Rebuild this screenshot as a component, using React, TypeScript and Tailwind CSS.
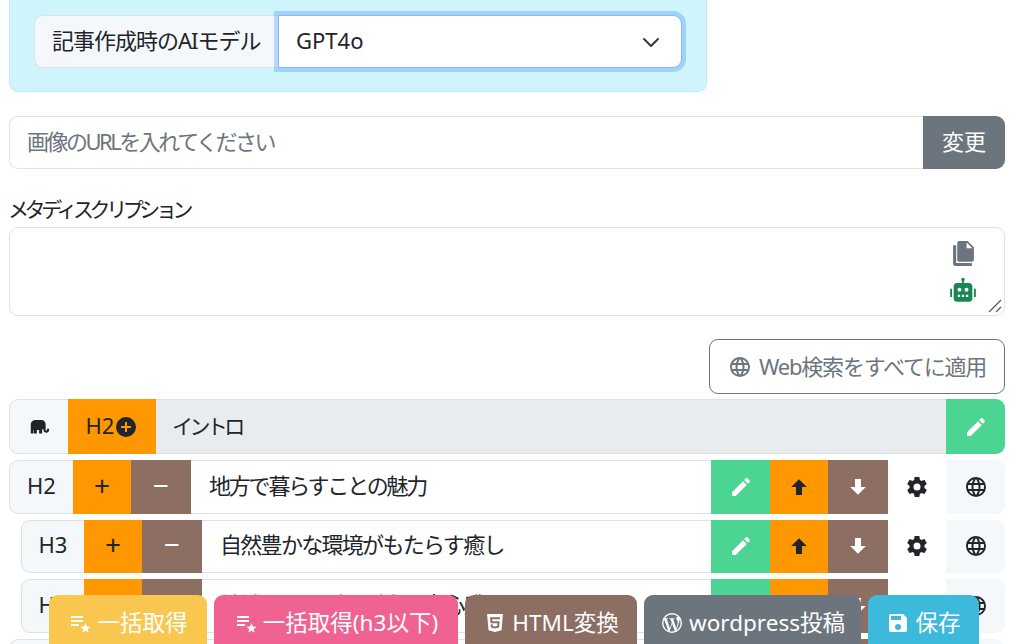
const P = {
  pencil: "M20.71,7.04C21.1,6.65 21.1,6 20.71,5.63L18.37,3.29C18,2.9 17.35,2.9 16.96,3.29L15.12,5.12L18.87,8.87M3,17.25V21H6.75L17.81,9.93L14.06,6.18L3,17.25Z",
  up: "M15,20H9V12H4.16L12,4.16L19.84,12H15V20Z",
  down: "M9,4H15V12H19.84L12,19.84L4.16,12H9V4Z",
  cog: "M12,15.5A3.5,3.5 0 0,1 8.5,12A3.5,3.5 0 0,1 12,8.5A3.5,3.5 0 0,1 15.5,12A3.5,3.5 0 0,1 12,15.5M19.43,12.97C19.47,12.65 19.5,12.33 19.5,12C19.5,11.67 19.47,11.34 19.43,11L21.54,9.37C21.73,9.22 21.78,8.95 21.66,8.73L19.66,5.27C19.54,5.05 19.27,4.96 19.05,5.05L16.56,6.05C16.04,5.66 15.5,5.32 14.87,5.07L14.5,2.42C14.46,2.18 14.25,2 14,2H10C9.75,2 9.54,2.18 9.5,2.42L9.13,5.07C8.5,5.32 7.96,5.66 7.44,6.05L4.95,5.05C4.73,4.96 4.46,5.05 4.34,5.27L2.34,8.73C2.21,8.95 2.27,9.22 2.46,9.37L4.57,11C4.53,11.34 4.5,11.67 4.5,12C4.5,12.33 4.53,12.65 4.57,12.97L2.46,14.63C2.27,14.78 2.21,15.05 2.34,15.27L4.34,18.73C4.46,18.95 4.73,19.03 4.95,18.95L7.44,17.94C7.96,18.34 8.5,18.68 9.13,18.93L9.5,21.58C9.54,21.82 9.75,22 10,22H14C14.25,22 14.46,21.82 14.5,21.58L14.87,18.93C15.5,18.67 16.04,18.34 16.56,17.94L19.05,18.95C19.27,19.03 19.54,18.95 19.66,18.73L21.66,15.27C21.78,15.05 21.73,14.78 21.54,14.63L19.43,12.97Z",
  web: "M16.36,14C16.44,13.34 16.5,12.68 16.5,12C16.5,11.32 16.44,10.66 16.36,10H19.74C19.9,10.64 20,11.31 20,12C20,12.69 19.9,13.36 19.74,14M14.59,19.56C15.19,18.45 15.65,17.25 15.97,16H18.92C17.96,17.65 16.43,18.93 14.59,19.56M14.34,14H9.66C9.56,13.34 9.5,12.68 9.5,12C9.5,11.32 9.56,10.65 9.66,10H14.34C14.43,10.65 14.5,11.32 14.5,12C14.5,12.68 14.43,13.34 14.34,14M12,19.96C11.17,18.76 10.5,17.43 10.09,16H13.91C13.5,17.43 12.83,18.76 12,19.96M8,8H5.08C6.03,6.34 7.57,5.06 9.4,4.44C8.8,5.55 8.35,6.75 8,8M5.08,16H8C8.35,17.25 8.8,18.45 9.4,19.56C7.57,18.93 6.03,17.65 5.08,16M4.26,14C4.1,13.36 4,12.69 4,12C4,11.31 4.1,10.64 4.26,10H7.64C7.56,10.66 7.5,11.32 7.5,12C7.5,12.68 7.56,13.34 7.64,14M12,4.03C12.83,5.23 13.5,6.57 13.91,8H10.09C10.5,6.57 11.17,5.23 12,4.03M18.92,8H15.97C15.65,6.75 15.19,5.55 14.59,4.44C16.43,5.07 17.96,6.34 18.92,8M12,2C6.47,2 2,6.5 2,12A10,10 0 0,0 12,22A10,10 0 0,0 22,12A10,10 0 0,0 12,2Z",
  save: "M15,9H5V5H15M12,19A3,3 0 0,1 9,16A3,3 0 0,1 12,13A3,3 0 0,1 15,16A3,3 0 0,1 12,19M17,3H5C3.89,3 3,3.9 3,5V19A2,2 0 0,0 5,21H19A2,2 0 0,0 21,19V7L17,3Z",
  plusCircle: "M17,13H13V17H11V13H7V11H11V7H13V11H17M12,2A10,10 0 0,0 2,12A10,10 0 0,0 12,22A10,10 0 0,0 22,12A10,10 0 0,0 12,2Z",
  html5: "M12,17.56L16.07,16.43L16.62,10.33H9.38L9.2,8.3H16.8L17,6.31H7L7.56,12.32H14.45L14.22,14.9L12,15.5L9.78,14.9L9.64,13.24H7.64L7.93,16.43L12,17.56M4.07,3H19.93L18.5,19.2L12,21L5.5,19.2L4.07,3Z",
  wordpress: "M3.42,12C3.42,10.76 3.69,9.58 4.17,8.5L8.26,19.72C5.4,18.33 3.42,15.4 3.42,12M17.79,11.57C17.79,12.3 17.5,13.15 17.14,14.34L16.28,17.2L13.18,8L14.16,7.9C14.63,7.84 14.57,7.16 14.11,7.19C14.11,7.19 12.72,7.3 11.82,7.3L9.56,7.19C9.1,7.16 9.05,7.87 9.5,7.9L10.41,8L11.75,11.64L9.87,17.27L6.74,8L7.73,7.9C8.2,7.84 8.13,7.16 7.67,7.19C7.67,7.19 6.28,7.3 5.38,7.3L4.83,7.29C6.37,4.96 9,3.42 12,3.42C14.23,3.42 16.27,4.28 17.79,5.68H17.68C16.84,5.68 16.24,6.41 16.24,7.2C16.24,7.91 16.65,8.5 17.08,9.2C17.41,9.77 17.79,10.5 17.79,11.57M12.15,12.75L14.79,19.97L14.85,20.09C13.96,20.41 13,20.58 12,20.58C11.16,20.58 10.35,20.46 9.58,20.23L12.15,12.75M19.53,7.88C20.2,9.1 20.58,10.5 20.58,12C20.58,15.16 18.86,17.93 16.31,19.41L18.93,11.82C19.42,10.61 19.58,9.64 19.58,8.77L19.53,7.88M12,2A10,10 0 0,0 2,12A10,10 0 0,0 12,22A10,10 0 0,0 22,12A10,10 0 0,0 12,2Z",
  files: "M15,7H20.5L15,1.5V7M8,0H16L22,6V18A2,2 0 0,1 20,20H8C6.89,20 6,19.1 6,18V2A2,2 0 0,1 8,0M5,4V21H20V24H4A2,2 0 0,1 2,22V4H5Z",
  robot: "M12,1.5A1.5,1.5 0 0,1 13.5,3C13.5,3.6 13.2,4 12.8,4.3V6H17A3,3 0 0,1 20,9V19A3,3 0 0,1 17,22H7A3,3 0 0,1 4,19V9A3,3 0 0,1 7,6H11.2V4.3C10.8,4 10.5,3.6 10.5,3A1.5,1.5 0 0,1 12,1.5M9,10A1.7,1.7 0 0,0 7.3,11.7A1.7,1.7 0 0,0 9,13.4A1.7,1.7 0 0,0 10.7,11.7A1.7,1.7 0 0,0 9,10M15,10A1.7,1.7 0 0,0 13.3,11.7A1.7,1.7 0 0,0 15,13.4A1.7,1.7 0 0,0 16.7,11.7A1.7,1.7 0 0,0 15,10M7.5,16V18H9.5V16H7.5M11,16V18H13V16H11M14.5,16V18H16.5V16H14.5M1,11H2.6V18H1V11M21.4,11H23V18H21.4V11Z",
  elephant: "M2,20V10C2,6.5 4.5,4.5 8,4.5H14C17.5,4.5 19,7 19,10V16C19,17 20.5,17 20.5,16V14.5H23V16C23,20 16.5,20 16.5,16V15H15V20H11.5V16H9V20H5.5V16H5V20H2Z",
  listStar: "M3,5H15V7H3V5M3,9H15V11H3V9M3,13H11V15H3V13M17.5,12L18.9,15.4L22.5,15.7L19.8,18.1L20.6,21.6L17.5,19.8L14.4,21.6L15.2,18.1L12.5,15.7L16.1,15.4L17.5,12Z",
};

function Icon({ d, className }: { d: string; className: string }) {
  return (
    <svg viewBox="0 0 24 24" fill="currentColor" fillRule="evenodd" className={className}>
      <path d={d} />
    </svg>
  );
}

function Row({ label, title, indent, tracking }: { label: string; title: string; indent?: boolean; tracking: string }) {
  return (
    <div className={`flex h-[53.5px] mb-[6px] ${indent ? "ml-3" : ""}`}>
      <div className={`flex items-center justify-center pb-1 bg-[#f5f8fa] border border-r-0 border-[#dee2e6] rounded-l-[9px] text-[#212529] ${indent ? "w-[63px]" : "w-[64px]"}`}>
        {label}
      </div>
      <div className="flex items-center justify-center pb-1 w-[58px] bg-[#ff9800] text-[#212529] text-[28px]">+</div>
      <div className="flex items-center justify-center pb-1 w-[60px] bg-[#8d6e63] text-white text-[28px]">−</div>
      <div className={`flex-1 min-w-0 flex items-center pb-1 px-[18px] bg-white border-y border-[#dee2e6] text-[#212529] whitespace-nowrap overflow-hidden ${tracking}`}>
        {title}
      </div>
      <div className="flex items-center justify-center w-[59px] bg-[#4cd493] text-white">
        <Icon d={P.pencil} className="w-6 h-6" />
      </div>
      <div className="flex items-center justify-center w-[58px] bg-[#ff9800] text-[#212529]">
        <Icon d={P.up} className="w-6 h-6" />
      </div>
      <div className="flex items-center justify-center w-[60px] bg-[#8d6e63] text-white">
        <Icon d={P.down} className="w-6 h-6" />
      </div>
      <div className="flex items-center justify-center w-[58px] bg-white text-[#212529]">
        <Icon d={P.cog} className="w-6 h-6" />
      </div>
      <div className="flex items-center justify-center w-[59px] bg-[#f5f8fa] rounded-r-[9px] text-[#212529]">
        <Icon d={P.web} className="w-6 h-6" />
      </div>
    </div>
  );
}

function FloatButton({ icon, label, color, width }: { icon: string; label: string; color: string; width: string }) {
  return (
    <div className={`flex items-start justify-center gap-[5px] pt-[13px] h-[60px] rounded-[9px] whitespace-nowrap text-[22.5px] ${color} ${width}`}>
      <Icon d={icon} className="w-6 h-6 mt-[3px] shrink-0" />
      <span>{label}</span>
    </div>
  );
}

export default function App() {
  return (
    <div className="relative h-[644px] overflow-hidden bg-white text-[22px] leading-[30px] text-[#212529] font-['Noto_Sans','Noto_Sans_CJK_JP',sans-serif]">
      <div className="pl-[9px] pr-[19px]">
        <div className="h-[92px] w-[698px] bg-[#cff4fc] border border-t-0 border-[#b6effb] rounded-b-[9px] px-6 pt-[15px]">
          <div className="flex h-[53px]">
            <div className="flex items-center w-[244px] pl-[17px] pb-1 bg-[#f5f8fa] border border-r-0 border-[#dee2e6] rounded-l-[9px] text-[#212529] whitespace-nowrap tracking-[-1px]">
              記事作成時のAIモデル
            </div>
            <div className="flex-1 flex items-center justify-between pl-[17px] pr-[22px] bg-white border border-[#86b7fe] rounded-r-[9px] shadow-[0_0_0_4px_rgba(13,110,253,0.25)]">
              <span className="pb-1">GPT4o</span>
              <svg viewBox="0 0 16 16" fill="none" stroke="#343a40" strokeWidth="2" strokeLinecap="round" strokeLinejoin="round" className="w-4 h-4">
                <path d="M1 5l7 7 7-7" />
              </svg>
            </div>
          </div>
        </div>

        <div className="flex h-[53px] mt-[24px]">
          <div className="flex-1 flex items-center pl-[17px] pb-1 bg-white border border-r-0 border-[#dee2e6] rounded-l-[9px] text-[#6c757d] tracking-[-2.5px]">
            画像のURLを入れてください
          </div>
          <div className="flex items-center justify-center pb-1 w-[82px] bg-[#6c757d] text-white rounded-r-[9px]">変更</div>
        </div>

        <div className="mt-[25px] mb-[3px] -ml-px text-[21px] text-[#212529] tracking-[-4.4px]">メタディスクリプション</div>
        <div className="relative h-[89px] bg-white border border-[#dee2e6] rounded-[9px]">
          <div className="absolute right-[25px] top-[13px] flex flex-col items-center">
            <Icon d={P.files} className="w-[25px] h-[25px] text-[#6c757d]" />
            <Icon d={P.robot} className="w-[32px] h-[28px] mt-[10px] text-[#198754]" />
          </div>
          <svg viewBox="0 0 14 14" className="absolute right-[2px] bottom-[2px] w-[14px] h-[14px]" stroke="#555" strokeWidth="1.2" fill="none">
            <path d="M1 13L13 1M8 13L13 8" />
          </svg>
        </div>

        <div className="flex justify-end mt-[23px] mb-[5px]">
          <div className="flex items-center justify-center gap-[7px] w-[296px] h-[55px] bg-white border border-[#6c757d] rounded-[9px] text-[#6c757d]">
            <Icon d={P.web} className="w-6 h-6" />
            <span className="whitespace-nowrap tracking-[-1.2px] pb-[2px]">Web検索をすべてに適用</span>
          </div>
        </div>

        <div className="flex h-[55px] mb-[6px]">
          <div className="flex items-center justify-center w-[59px] bg-[#f5f8fa] border border-r-0 border-[#dee2e6] rounded-l-[9px]">
            <Icon d={P.elephant} className="w-[21px] h-[21px]" />
          </div>
          <div className="flex items-center justify-center w-[88px] bg-[#ff9800] text-[#212529]">
            <span className="pb-1">H2</span>
            <Icon d={P.plusCircle} className="w-6 h-6" />
          </div>
          <div className="flex-1 flex items-center pl-[16px] pb-[2px] bg-[#e9ecef] border-y border-[#dee2e6] text-[#212529] text-[21px] tracking-[-3.6px]">イントロ</div>
          <div className="flex items-center justify-center w-[59px] bg-[#4cd493] text-white rounded-r-[9px]">
            <Icon d={P.pencil} className="w-6 h-6" />
          </div>
        </div>

        <Row label="H2" title="地方で暮らすことの魅力" tracking="tracking-[-2.2px]" />
        <Row indent label="H3" title="自然豊かな環境がもたらす癒し" tracking="tracking-[-1.7px]" />
        <Row indent label="H3" title="地域のつながりが生む安心感とぬくもり" tracking="tracking-[-1.7px]" />
        <Row label="H2" title="" tracking="" />
      </div>

      <div className="absolute left-[49px] top-[595px] flex gap-[7px]">
        <FloatButton icon={P.listStar} label="一括取得" color="bg-[#f9c74f] text-white" width="w-[158px]" />
        <FloatButton icon={P.listStar} label="一括取得(h3以下)" color="bg-[#f06292] text-white" width="w-[244px]" />
        <FloatButton icon={P.html5} label="HTML変換" color="bg-[#8d6e63] text-white" width="w-[172px]" />
        <FloatButton icon={P.wordpress} label="wordpress投稿" color="bg-[#6c757d] text-white" width="w-[217px]" />
        <FloatButton icon={P.save} label="保存" color="bg-[#3db9dc] text-white" width="w-[111px]" />
      </div>
    </div>
  );
}
